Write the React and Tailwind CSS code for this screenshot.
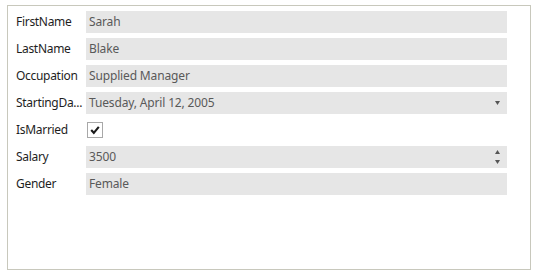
const rows = [
  { label: "FirstName", value: "Sarah" },
  { label: "LastName", value: "Blake" },
  { label: "Occupation", value: "Supplied Manager" },
  { label: "StartingDa...", value: "Tuesday, April 12, 2005", kind: "date" },
  { label: "IsMarried", kind: "check" },
  { label: "Salary", value: "3500", kind: "spin" },
  { label: "Gender", value: "Female" },
];

function Field({ row }) {
  if (row.kind === "check") {
    return (
      <div className="h-[22px] flex items-center pl-[1px]">
        <div className="w-4 h-4 border border-[#a8a8a8] bg-white flex items-center justify-center">
          <svg width="12" height="12" viewBox="0 0 12 12">
            <path d="M2.2 6 L4.8 8.8 L9.8 2.8" fill="none" stroke="#1a1a1a" strokeWidth="2.1" />
          </svg>
        </div>
      </div>
    );
  }
  return (
    <div className="h-[22px] bg-[#e6e6e6] flex items-center pl-[3px] pr-[7px] text-[#595959]">
      <span className="flex-1">{row.value}</span>
      {row.kind === "date" && (
        <svg width="5" height="4" viewBox="0 0 5 4">
          <path d="M0 0 H5 L2.5 4 Z" fill="#555" />
        </svg>
      )}
      {row.kind === "spin" && (
        <div className="flex flex-col gap-[6px]">
          <svg width="5" height="4" viewBox="0 0 5 4">
            <path d="M0 4 H5 L2.5 0 Z" fill="#555" />
          </svg>
          <svg width="5" height="4" viewBox="0 0 5 4">
            <path d="M0 0 H5 L2.5 4 Z" fill="#555" />
          </svg>
        </div>
      )}
    </div>
  );
}

export default function App() {
  return (
    <div className="w-[537px] h-[273px] bg-white pt-[5px] pl-[7px] font-['Noto_Sans',sans-serif] text-[12px] tracking-[-0.15px]">
      <div className="w-[524px] h-[265px] border border-[#c8c8bc] pt-[5px] pl-[8px] flex flex-col gap-[5px]">
        {rows.map((row) => (
          <div key={row.label} className="flex items-center">
            <div className="w-[70px] whitespace-nowrap tracking-[-0.3px] text-[#1e1e1e]">{row.label}</div>
            <div className="w-[421px]">
              <Field row={row} />
            </div>
          </div>
        ))}
      </div>
    </div>
  );
}
